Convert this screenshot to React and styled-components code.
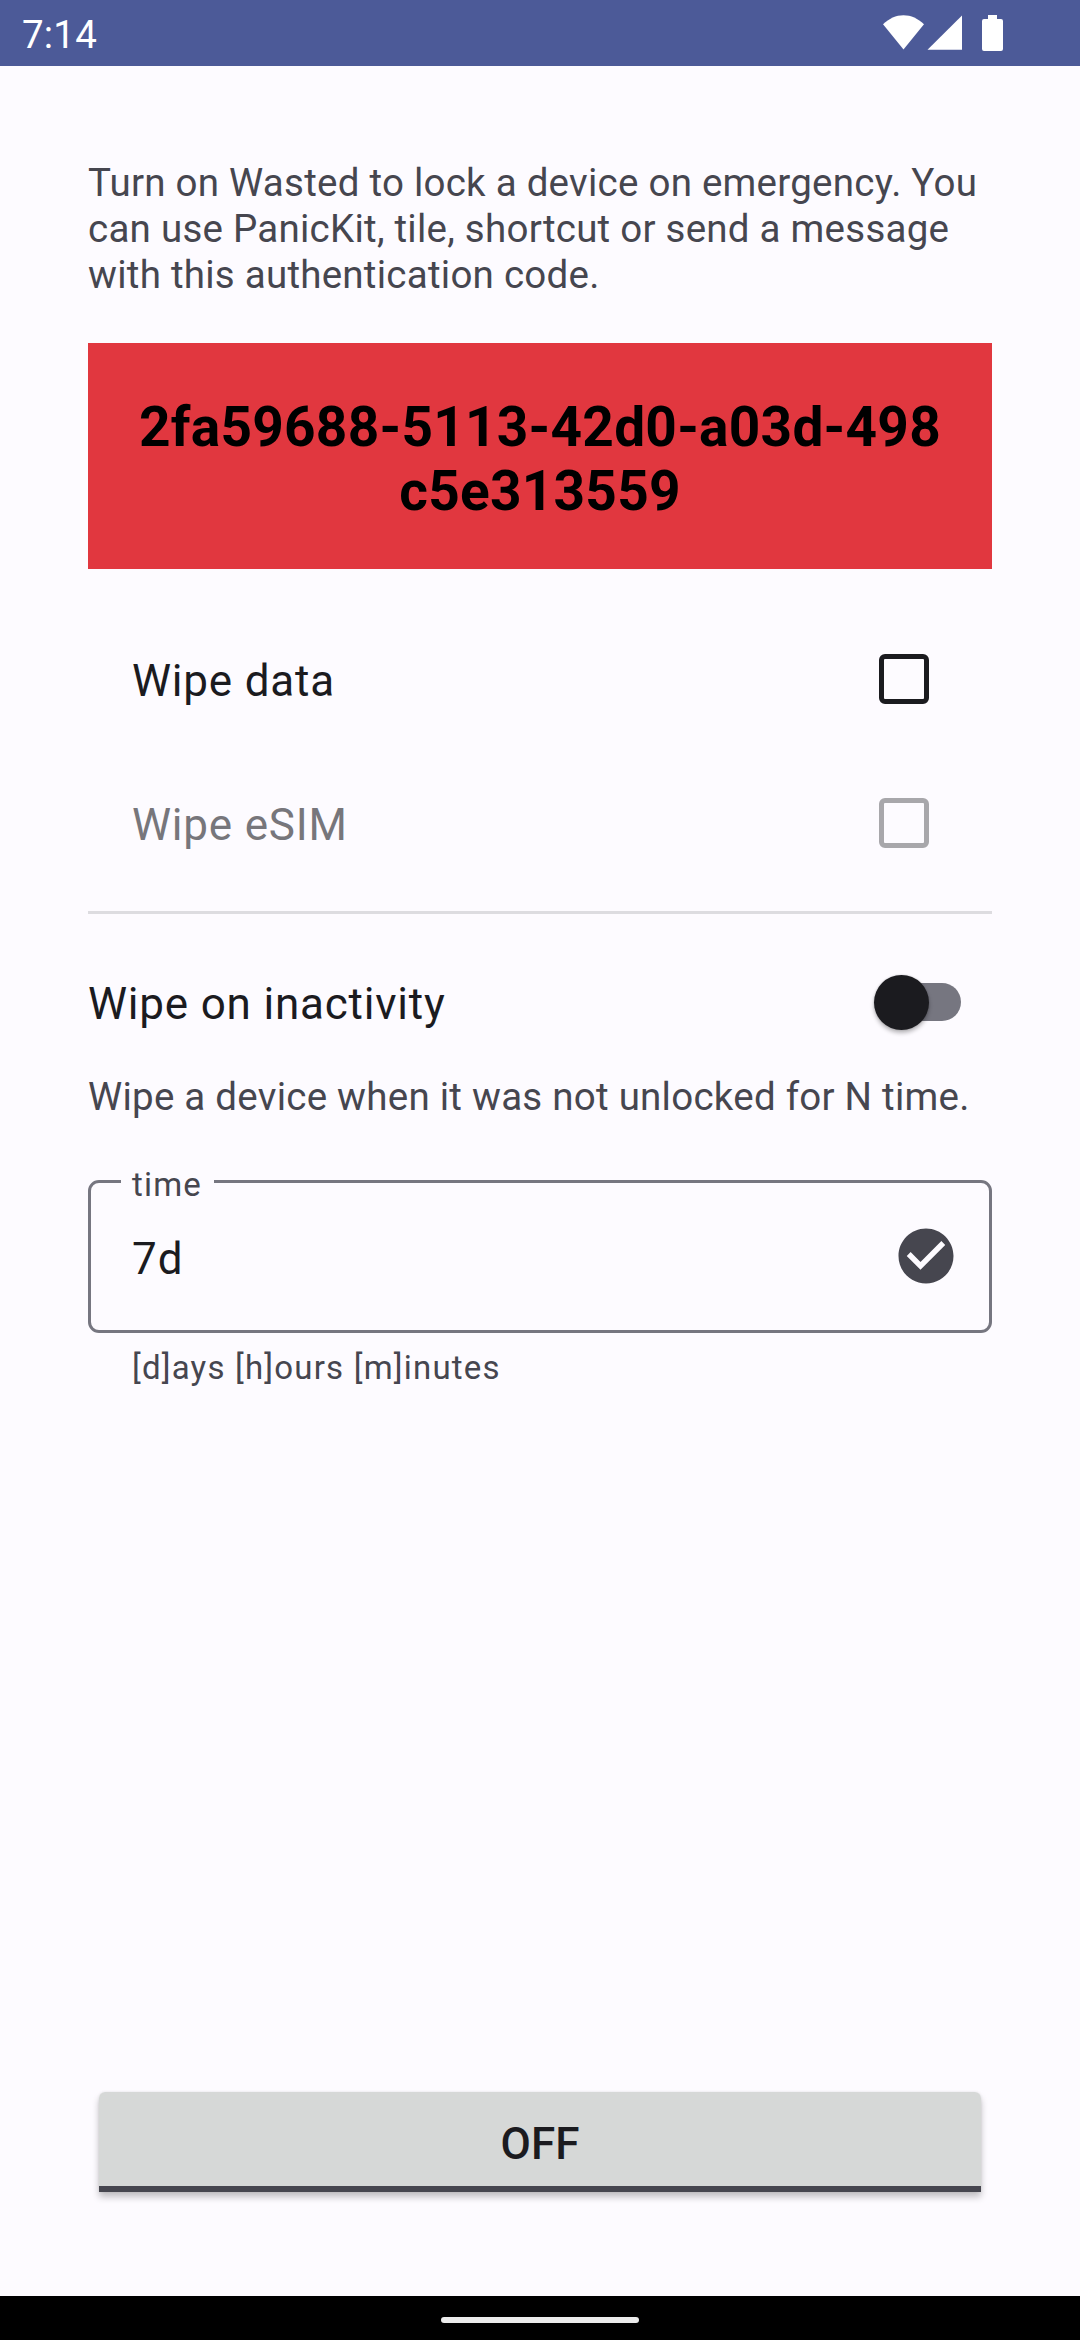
import React from "react";
import styled, { createGlobalStyle } from "styled-components";

const GlobalStyle = createGlobalStyle`
  * { box-sizing: border-box; }
  body { margin: 0; background: #fdfbff; }
`;

const Screen = styled.div`
  display: flex;
  flex-direction: column;
  width: 1080px;
  height: 2340px;
  background: #fdfbff;
  color: #1b1b1f;
  font-family: Roboto, "Liberation Sans", sans-serif;
  font-size: 44px;
  line-height: 52px;
`;

const StatusBar = styled.header`
  display: flex;
  justify-content: space-between;
  height: 66px;
  padding: 0 77px 0 22px;
  background: #4c5a98;
  color: #fff;
`;

const Clock = styled.span`
  padding-top: 12px;
  font-size: 38.5px;
  line-height: 46px;
  letter-spacing: 0.2px;
`;

const StatusIcons = styled.svg`
  width: 121px;
  height: 66px;
  fill: #fff;
`;

const Content = styled.main`
  flex: 1;
  display: flex;
  flex-direction: column;
  padding: 94px 88px 104px;
`;

const Description = styled.p`
  margin: ${(p) => (p.$spaced ? "6px 0 0" : "0")};
  color: #46464f;
  font-size: 38.5px;
  line-height: 46px;
  letter-spacing: 0.25px;
  white-space: nowrap;
`;

const CodeBox = styled.div`
  display: flex;
  flex-direction: column;
  align-items: center;
  height: 226px;
  margin-top: 45px;
  padding-top: 52px;
  background: #e1373f;
  color: #000;
  font-size: 55px;
  font-weight: 700;
  line-height: 64px;
  letter-spacing: 0.25px;
`;

const Options = styled.section`
  margin-top: 38px;
  padding-bottom: 16px;
  border-bottom: 3px solid #dddce0;
`;

const OptionRow = styled.label`
  display: flex;
  align-items: center;
  justify-content: space-between;
  height: 144px;
  padding: 0 63px 0 44px;
`;

const Label = styled.span`
  padding-top: 4px;
  letter-spacing: 0.8px;
  color: ${(p) => (p.$disabled ? "#77767b" : "#1b1b1f")};
`;

const Checkbox = styled.span`
  width: 50px;
  height: 50px;
  border: 5.5px solid ${(p) => (p.$disabled ? "#a8a7ab" : "#1b1b1f")};
  border-radius: 6px;
`;

const SwitchRow = styled.label`
  display: flex;
  align-items: center;
  justify-content: space-between;
  height: 132px;
  margin-top: 22px;
  padding-right: 31px;
`;

const Track = styled.span`
  display: flex;
  align-items: center;
  width: 80px;
  height: 38px;
  border-radius: 19px;
  background: #767680;
`;

const Thumb = styled.span`
  flex: none;
  width: 55px;
  height: 55px;
  margin-left: -7px;
  border-radius: 50%;
  background: #1b1b1f;
  box-shadow: 0 3px 4px rgba(0, 0, 0, 0.28), 0 0 2px rgba(0, 0, 0, 0.2);
`;

const Field = styled.div`
  position: relative;
  display: flex;
  align-items: center;
  justify-content: space-between;
  height: 153px;
  margin-top: 60px;
  padding: 0 30px 0 41px;
  border: 3px solid #767680;
  border-radius: 11px;
`;

const FieldLabel = styled.span`
  position: absolute;
  top: -18px;
  left: 30px;
  width: 93px;
  padding-left: 11px;
  background: #fdfbff;
  color: #46464f;
  font-size: 33px;
  line-height: 39px;
  letter-spacing: 1.2px;
`;

const FieldValue = styled.span`
  padding-top: 5px;
  letter-spacing: 1px;
`;

const CheckIcon = styled.svg`
  width: 66px;
  height: 66px;
  margin-bottom: 1px;
  fill: #46464f;
`;

const Helper = styled.span`
  margin-top: 15px;
  padding-left: 44px;
  color: #46464f;
  font-size: 33px;
  line-height: 39px;
  letter-spacing: 1.2px;
`;

const ToggleButton = styled.button`
  height: 100px;
  margin: auto 11px 0;
  padding: 4px 0 0;
  border: 0;
  border-radius: 6px 6px 0 0;
  background: linear-gradient(#d6d8d7 94px, #46464f 94px);
  box-shadow: 0 5px 7px rgba(0, 0, 0, 0.24), 0 0 3px rgba(0, 0, 0, 0.08);
  color: #1b1b1f;
  font: 500 44px/52px Roboto, "Liberation Sans", sans-serif;
`;

const NavBar = styled.footer`
  display: flex;
  justify-content: center;
  height: 44px;
  padding-top: 21px;
  background: #000;
`;

const NavHandle = styled.span`
  width: 198px;
  height: 6px;
  border-radius: 3px;
  background: #ebebeb;
`;

const Option = ({ text, disabled }) => (
  <OptionRow>
    <Label $disabled={disabled}>{text}</Label>
    <Checkbox $disabled={disabled} />
  </OptionRow>
);

export default function App() {
  return (
    <>
      <GlobalStyle />
      <Screen>
        <StatusBar>
          <Clock>7:14</Clock>
          <StatusIcons viewBox="0 0 121 66">
            <path d="M1 24.3C7 18.4 14 15.2 21.5 15.2S36 18.4 42 24.3L21.5 49.5Z" />
            <path d="M80 15.5V49.7H45.5Z" />
            <path d="M106 15h9v4h4q2 0 2 2v28q0 2-2 2h-17q-2 0-2-2V21q0-2 2-2h4z" />
          </StatusIcons>
        </StatusBar>
        <Content>
          <Description>
            Turn on Wasted to lock a device on emergency. You
            <br />
            can use PanicKit, tile, shortcut or send a message
            <br />
            with this authentication code.
          </Description>
          <CodeBox>
            <span>2fa59688-5113-42d0-a03d-498</span>
            <span>c5e313559</span>
          </CodeBox>
          <Options>
            <Option text="Wipe data" />
            <Option text="Wipe eSIM" disabled />
          </Options>
          <SwitchRow>
            <Label>Wipe on inactivity</Label>
            <Track>
              <Thumb />
            </Track>
          </SwitchRow>
          <Description $spaced>
            Wipe a device when it was not unlocked for N time.
          </Description>
          <Field>
            <FieldLabel>time</FieldLabel>
            <FieldValue>7d</FieldValue>
            <CheckIcon viewBox="0 0 24 24">
              <path d="M12 2C6.48 2 2 6.48 2 12s4.48 10 10 10 10-4.48 10-10S17.52 2 12 2zm-2 15l-5-5 1.41-1.41L10 14.17l7.59-7.59L19 8l-9 9z" />
            </CheckIcon>
          </Field>
          <Helper>[d]ays [h]ours [m]inutes</Helper>
          <ToggleButton>OFF</ToggleButton>
        </Content>
        <NavBar>
          <NavHandle />
        </NavBar>
      </Screen>
    </>
  );
}
